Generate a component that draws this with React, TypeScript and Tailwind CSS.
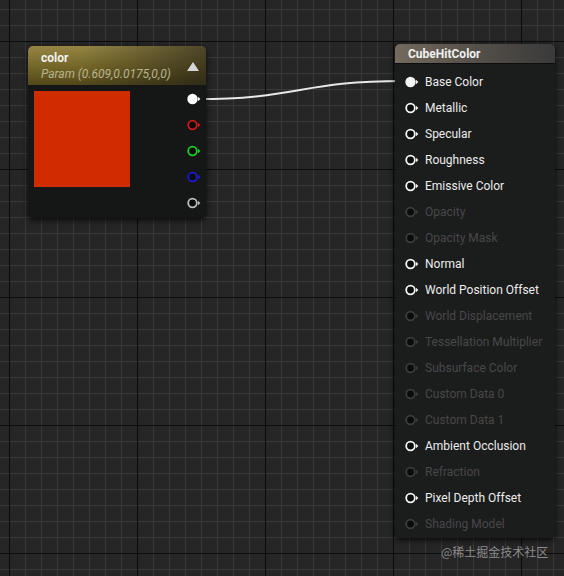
import React from "react";

const FONT = { fontFamily: "Roboto, 'Noto Sans', sans-serif" };

type PinProps = { color: string; filled?: boolean; dim?: boolean };

function Pin({ color, filled, dim }: PinProps) {
  return (
    <svg width="14" height="12" viewBox="0 0 14 12" className="shrink-0">
      <circle
        cx="5.5"
        cy="6"
        r={filled ? 5.2 : 4.3}
        fill={filled ? color : "#0b0b0b"}
        stroke={color}
        strokeWidth={filled ? 0 : 1.8}
        opacity={dim ? 0.35 : 1}
      />
      <path d="M11 3.8 L13.4 6 L11 8.2 Z" fill={color} opacity={dim ? 0.35 : 1} />
    </svg>
  );
}

const inputs: { label: string; active: boolean; filled?: boolean }[] = [
  { label: "Base Color", active: true, filled: true },
  { label: "Metallic", active: true },
  { label: "Specular", active: true },
  { label: "Roughness", active: true },
  { label: "Emissive Color", active: true },
  { label: "Opacity", active: false },
  { label: "Opacity Mask", active: false },
  { label: "Normal", active: true },
  { label: "World Position Offset", active: true },
  { label: "World Displacement", active: false },
  { label: "Tessellation Multiplier", active: false },
  { label: "Subsurface Color", active: false },
  { label: "Custom Data 0", active: false },
  { label: "Custom Data 1", active: false },
  { label: "Ambient Occlusion", active: true },
  { label: "Refraction", active: false },
  { label: "Pixel Depth Offset", active: true },
  { label: "Shading Model", active: false },
];

function GridBackground() {
  return (
    <svg className="absolute inset-0" width="564" height="576">
      <defs>
        <pattern id="minor" x="9" y="9" width="16" height="16" patternUnits="userSpaceOnUse">
          <path d="M0 0.5 H16 M0.5 0 V16" stroke="#393939" strokeWidth="1" fill="none" />
        </pattern>
        <pattern id="major" x="9" y="41" width="128" height="128" patternUnits="userSpaceOnUse">
          <path d="M0 0.5 H128 M0.5 0 V128" stroke="#0c0c0c" strokeWidth="1.2" fill="none" />
        </pattern>
      </defs>
      <rect width="564" height="576" fill="url(#minor)" />
      <rect width="564" height="576" fill="url(#major)" />
    </svg>
  );
}

function ColorNode() {
  const pins = ["#ffffff", "#d01a1a", "#1ed11e", "#1a1ad8", "#bdbdbd"];
  return (
    <div
      className="absolute left-[28px] top-[46px] w-[178px] h-[172px] rounded-[5px] bg-[#151616] shadow-[0_2px_6px_rgba(0,0,0,0.8)] overflow-hidden"
      style={FONT}
    >
      <div className="relative h-[39px] bg-[linear-gradient(180deg,#958544_0%,#736527_55%,#51471a_100%)] px-[13px] pt-[5px]">
        <div className="absolute inset-0 bg-[linear-gradient(90deg,rgba(0,0,0,0)_30%,rgba(20,20,20,0.55)_100%)]" />
        <div className="relative text-[12px] font-bold leading-[15px] text-[#f2f2f2]">color</div>
        <div className="relative text-[12px] italic leading-[16px] text-[#b9b38f]">Param (0.609,0.0175,0,0)</div>
        <svg className="absolute left-[159px] top-[16px]" width="12" height="9" viewBox="0 0 12 9">
          <path d="M6 0 L12 9 L0 9 Z" fill="#d6d6d6" />
        </svg>
      </div>
      <div className="flex pl-[6px] pt-[6px]">
        <div className="w-[96px] h-[96px] bg-[#d02c00]" />
        <div className="ml-auto flex flex-col pr-[5px] -mt-[5px]">
          {pins.map((c, i) => (
            <div key={i} className="h-[26px] flex items-center">
              <Pin color={c} filled={i === 0} />
            </div>
          ))}
        </div>
      </div>
    </div>
  );
}

function ResultNode() {
  return (
    <div
      className="absolute left-[395px] top-[44px] w-[160px] h-[494px] rounded-[5px] bg-[#1b1c1c] shadow-[0_2px_6px_rgba(0,0,0,0.8)] overflow-hidden"
      style={FONT}
    >
      <div className="h-[20px] bg-[linear-gradient(90deg,#746a5d_0%,#5a544c_40%,#3a3a3a_100%)] border-b border-[#0e0e0e] pl-[13px] text-[12px] font-bold leading-[20px] text-[#f0f0f0]">
        CubeHitColor
      </div>
      <div className="flex flex-col pt-[5px] pl-[10px]">
        {inputs.map((r) => (
          <div key={r.label} className="h-[26px] flex items-center gap-[6px]">
            <Pin color={r.active ? "#f4f4f4" : "#3c3c3c"} filled={r.filled} />
            <span
              className={
                "text-[12px] whitespace-nowrap " + (r.active ? "text-[#ececec]" : "text-[#484848]")
              }
            >
              {r.label}
            </span>
          </div>
        ))}
      </div>
    </div>
  );
}

export default function App() {
  return (
    <div className="relative w-[564px] h-[576px] bg-[#262626] overflow-hidden">
      <GridBackground />
      <svg className="absolute inset-0" width="564" height="576">
        <path d="M197 99 C 300 99, 300 81, 404 81" stroke="#e8e8e8" strokeWidth="2" fill="none" />
      </svg>
      <ColorNode />
      <ResultNode />
      <div
        className="absolute left-[441px] top-[543px] text-[12px] text-[#8c8c8c]"
        style={{ fontFamily: "'Noto Sans CJK SC', sans-serif" }}
      >
        @稀土掘金技术社区
      </div>
    </div>
  );
}
